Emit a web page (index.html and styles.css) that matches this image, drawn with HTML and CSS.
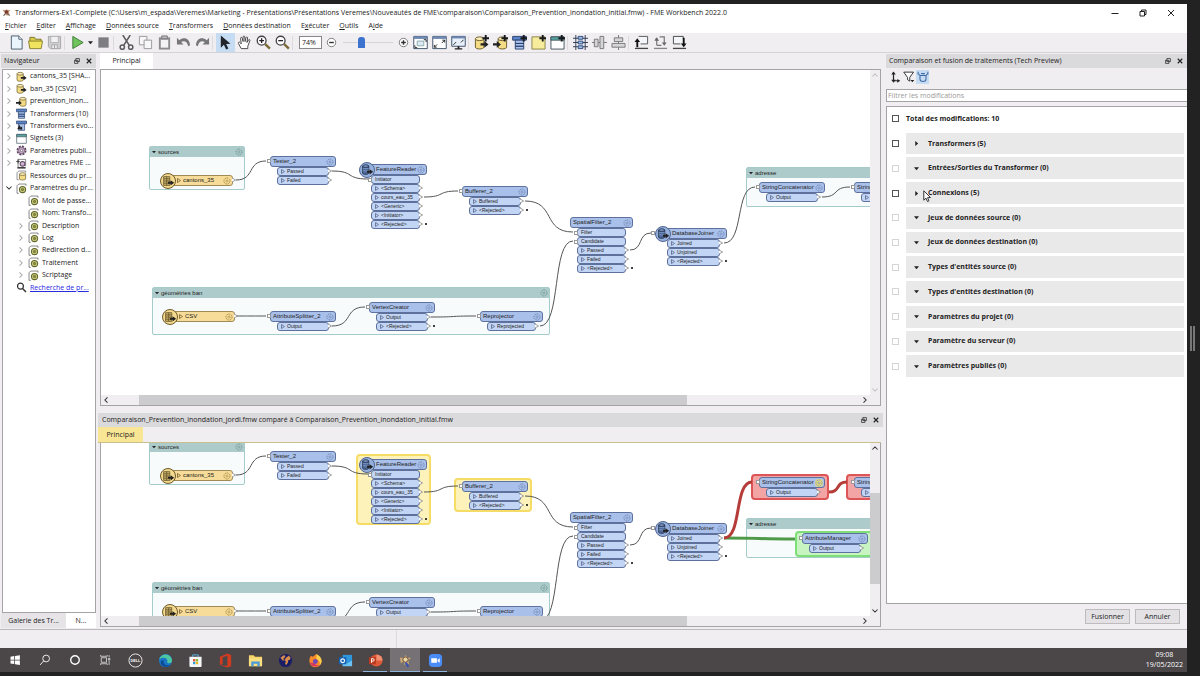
FILE: index.html
```html
<!DOCTYPE html>
<html lang="fr">
<head>
  <meta charset="UTF-8">
  <meta name="viewport" content="width=device-width, initial-scale=1">
  <title>FME Workbench 2022.0</title>
  <link rel="stylesheet" href="styles.css">
</head>
<body>
  <!-- Icon sprite -->
  <svg class="sprite" aria-hidden="true">
    <symbol id="i-fme" viewBox="0 0 16 16"><path d="M1 3l5 1 2-2 3 2 4-1-3 4 1 3 2 4-4-3-2 3-2-3-5 3 3-5z" fill="#b98a6a"/><circle cx="8" cy="7" r="3" fill="#7a3b34"/><path d="M3 14l3-4M13 14l-3-4" stroke="#444" stroke-width="1.5"/></symbol>
    <symbol id="i-new" viewBox="0 0 16 16"><path d="M2.500 1h8l3.500 3.500V15h-11.500z" fill="#eaf4fc" stroke="#4a5c6c"/><path d="M10.500 1v3.500H14" fill="#fff" stroke="#4a5c6c"/></symbol>
    <symbol id="i-open" viewBox="0 0 16 16"><path d="M2 14V2.500h5l1 2h6V7" fill="#d9cb4a" stroke="#7d7428"/><path d="M.5 6.500h15L14 14.500H2z" fill="#f0e35e" stroke="#8b8130"/></symbol>
    <symbol id="i-save" viewBox="0 0 16 16"><path d="M1.500 1.500h13v13h-11l-2-2z" fill="#cfcfd2" stroke="#a4a4a8"/><path d="M4 1.500h8V8H4z" fill="#f1f1f3" stroke="#b3b3b6"/><path d="M5 10.500h6v4H5z" fill="#eee" stroke="#a4a4a8"/><path d="M8 11v3" stroke="#999"/></symbol>
    <symbol id="i-play" viewBox="0 0 16 16"><path d="M3 1.500l11 6.500-11 6.500z" fill="#6fc45e" stroke="#3f7a38"/></symbol>
    <symbol id="i-caret" viewBox="0 0 6 6"><path d="M0 1.500h6L3 5z" fill="#222"/></symbol>
    <symbol id="i-caret-r" viewBox="0 0 6 6"><path d="M1.500 0v6L5 3z" fill="#222"/></symbol>
    <symbol id="i-stop" viewBox="0 0 16 16"><path d="M2.500 2.500h11v11h-11z" fill="#7d7d82"/></symbol>
    <symbol id="i-cut" viewBox="0 0 16 16"><g fill="none" stroke="#5a5a5e" stroke-width="1.600"><path d="M4 0l7 11M12 0L5 11"/><circle cx="3.500" cy="13" r="2.300"/><circle cx="12.500" cy="13" r="2.300"/></g></symbol>
    <symbol id="i-copy" viewBox="0 0 16 16"><g fill="#f7f7f9" stroke="#98989c"><path d="M1.500 1.500h8v9h-8z"/><path d="M6.500 5.500h8v9h-8z"/></g></symbol>
    <symbol id="i-paste" viewBox="0 0 16 16"><path d="M2 2.500h12v13H2z" fill="#8c8c90"/><path d="M4 5h8v8.500H4z" fill="#f3f3f5"/><path d="M5 1h6v3H5z" fill="#b9b9bd" stroke="#77777b"/></symbol>
    <symbol id="i-undo" viewBox="0 0 16 16"><path d="M1 3v7h7L5.500 7.500C9 5.500 12 7 13 12l2-1C14.500 4 9 1.500 3.500 5.500z" fill="#77777b"/></symbol>
    <symbol id="i-redo" viewBox="0 0 16 16"><path d="M15 3v7H8l2.500-2.500C7 5.500 4 7 3 12l-2-1C1.500 4 7 1.500 12.500 5.500z" fill="#77777b"/></symbol>
    <symbol id="i-pointer" viewBox="0 0 16 16"><path d="M3 .5v13l3.300-3 2.400 5 2.400-1.200L8.700 9.500l4.600-.3z" fill="#22242c"/></symbol>
    <symbol id="i-hand" viewBox="0 0 16 16"><path d="M4.500 14.500L1.500 9c-.5-1.500 1-2 2-.7l1 1.200-.7-6c0-1.300 1.500-1.300 1.800 0l.9 3.500V2c.2-1.200 1.700-1.200 1.800 0l.3 5 1-4.300c.5-1 1.700-.7 1.700.4L10.600 8l1.700-2.800c.8-.9 1.900-.2 1.400.9L11.500 12v2.500z" fill="#fff" stroke="#444"/></symbol>
    <symbol id="i-zoomin" viewBox="0 0 16 16"><circle cx="6" cy="6" r="4.700" fill="#fff" stroke="#444" stroke-width="1.400"/><path d="M3.500 6h5M6 3.500v5" stroke="#222" stroke-width="1.400"/><path d="M9.800 9.800l5 4.700" stroke="#7b6a35" stroke-width="2.600"/></symbol>
    <symbol id="i-zoomout" viewBox="0 0 16 16"><circle cx="6" cy="6" r="4.700" fill="#fff" stroke="#444" stroke-width="1.400"/><path d="M3.500 6h5" stroke="#222" stroke-width="1.400"/><path d="M9.800 9.800l5 4.700" stroke="#7b6a35" stroke-width="2.600"/></symbol>
    <symbol id="i-minus" viewBox="0 0 16 16"><circle cx="8" cy="8" r="4.500" fill="#fff" stroke="#777"/><path d="M5.500 8h5" stroke="#333" stroke-width="1.500"/></symbol>
    <symbol id="i-plus" viewBox="0 0 16 16"><circle cx="8" cy="8" r="4.500" fill="#fff" stroke="#777"/><path d="M5.500 8h5M8 5.500v5" stroke="#333" stroke-width="1.500"/></symbol>
    <symbol id="i-fit" viewBox="0 0 16 16"><path d="M.8 1.500h14.400v13H.8z" fill="#fff" stroke="#3d4f69"/><path d="M.8 1.500h14.400v2.700H.8z" fill="#6f8bb3"/><path d="M4.500 6.500h7v5h-7z" fill="#dce9f7" stroke="#8aa"/><path d="M2 13.500V11M2 13.500h2.500M14 5v2.500M14 5h-2.500" stroke="#222" fill="none"/></symbol>
    <symbol id="i-full" viewBox="0 0 16 16"><path d="M.8 1.500h14.400v13H.8z" fill="#fff" stroke="#3d4f69"/><path d="M.8 1.500h14.400v2.700H.8z" fill="#6f8bb3"/><path d="M2.500 13l3-3M2.500 13v-2.500M2.500 13H5M13.500 5.500l-3 3M13.500 5.500V8M13.500 5.500H11" stroke="#222" fill="none"/></symbol>
    <symbol id="i-screen" viewBox="0 0 16 16"><path d="M.8 1.500h14.400v10.500H.8z" fill="#e8f1fb" stroke="#3d4f69"/><path d="M.8 1.500h14.400v2.200H.8z" fill="#6f8bb3"/><path d="M2.500 10.500l3-3M13.500 5l-3 3" stroke="#222"/><path d="M7 12h2v2h3v1.500H4V14h3z" fill="#222"/></symbol>
    <symbol id="i-reader" viewBox="0 0 16 16"><path d="M1.500 4v9c0 2.500 9 2.500 9 0V4" fill="#f3dc84" stroke="#6b5a2a"/><ellipse cx="6" cy="4" rx="4.500" ry="2" fill="#faedb4" stroke="#6b5a2a"/><path d="M7 8.800h4V6.500L15.500 10 11 13.500v-2.300H7z" fill="#222"/></symbol>
    <symbol id="i-writer" viewBox="0 0 16 16"><path d="M5.500 4v9c0 2.500 9 2.500 9 0V4" fill="#f3dc84" stroke="#6b5a2a"/><ellipse cx="10" cy="4" rx="4.500" ry="2" fill="#faedb4" stroke="#6b5a2a"/><path d="M0 8.800h4V6.500L8.500 10 4 13.500v-2.300H0z" fill="#222"/></symbol>
    <symbol id="i-add" viewBox="0 0 16 16"><path d="M12.500 0v7M9 3.500h7" stroke="#16181c" stroke-width="2"/></symbol>
    <symbol id="i-transformer" viewBox="0 0 16 16"><path d="M.7 1.500h14.600v4H.7z" fill="#5b84c6" stroke="#2b4270"/><path d="M3.500 5.500h9V9h-9zM3.500 9h9v3h-9zM3.500 12h9v3h-9z" fill="#a9c3ec" stroke="#2b4270"/></symbol>
    <symbol id="i-note" viewBox="0 0 16 16"><path d="M1 2h14v13H1z" fill="#f6ec9c" stroke="#8a8247"/></symbol>
    <symbol id="i-bookmark" viewBox="0 0 16 16"><path d="M1 2h14v13H1z" fill="#fff" stroke="#44565e"/><path d="M1 2h14v3.500H1z" fill="#57a5a3" stroke="#44565e"/></symbol>
    <symbol id="i-grid" viewBox="0 0 16 16"><path d="M0 3.500h16M0 8h16M0 12.500h16M3 0v16M13 0v16" stroke="#2f3a50"/><path d="M5.500 1.500h5v3h-5zM5.500 6.500h5v3h-5zM5.500 11.500h5v3h-5z" fill="#9bbbe6" stroke="#2f4b7c"/></symbol>
    <symbol id="i-alignh" viewBox="0 0 16 16"><path d="M0 8h16" stroke="#777"/><path d="M2.500 4.500h4v8h-4zM8.500 1.500h4v13h-4z" fill="#d5d5d8" stroke="#77777b"/></symbol>
    <symbol id="i-alignv" viewBox="0 0 16 16"><path d="M8 0v16" stroke="#777"/><path d="M3.500 3h9v4h-9zM1 9h14v4H1z" fill="#d5d5d8" stroke="#77777b"/></symbol>
    <symbol id="i-up" viewBox="0 0 16 16"><path d="M5 1.500h9.500v8H7" fill="#f2f6fb" stroke="#555"/><path d="M1 14.300h14" stroke="#444" stroke-width="1.400"/><path d="M3.500 13V6" stroke="#111" stroke-width="2"/><path d="M.5 7.500l3-4 3 4z" fill="#111"/></symbol>
    <symbol id="i-swap" viewBox="0 0 16 16"><path d="M4 11V4.500h-1.500M7 2h5v7M4 11h5" fill="none" stroke="#777" stroke-width="1.300"/><path d="M1 14.300h14" stroke="#888" stroke-width="1.400"/><path d="M1.500 6L4 2.500 6.500 6zM9.500 8h5L12 11.500z" fill="#666"/></symbol>
    <symbol id="i-down" viewBox="0 0 16 16"><path d="M9 9.500H1.500v-8H12v3" fill="#f2f6fb" stroke="#444"/><path d="M1 14.300h14" stroke="#444" stroke-width="1.400"/><path d="M12.500 3v7" stroke="#111" stroke-width="2"/><path d="M9.500 9h6l-3 4z" fill="#111"/></symbol>
    <symbol id="i-custom" viewBox="0 0 16 16"><path d="M.7 1.500h14.600v4H.7z" fill="#5b84c6" stroke="#2b4270"/><path d="M3.500 5.500h9V15h-9z" fill="#a9c3ec" stroke="#2b4270"/><path d="M2 13l3-6 2 4 2-2v5z" fill="#222"/></symbol>
    <symbol id="i-param" viewBox="0 0 16 16"><circle cx="8" cy="8" r="6" fill="#e6d4e6" stroke="#5d4560" stroke-width="2.500" stroke-dasharray="3 1.700"/><circle cx="8" cy="8" r="4.500" fill="#cdb3cf" stroke="#5d4560"/><circle cx="8" cy="8" r="1.700" fill="#fff" stroke="#5d4560"/></symbol>
    <symbol id="i-fmeparam" viewBox="0 0 16 16"><path d="M3 14V2h11v10" stroke="#555" fill="#fff"/><path d="M.5 5h5M3 8V2" stroke="#333" stroke-width="1.300"/><circle cx="9.500" cy="8.500" r="3.500" fill="#cdb3cf" stroke="#5d4560" stroke-width="1.500"/><path d="M2 14.300h12" stroke="#222" stroke-width="2"/></symbol>
    <symbol id="i-res" viewBox="0 0 16 16"><path d="M4 14H1.500V4L4 1.500h10V4" fill="#fff" stroke="#666"/><path d="M5 6v7c0 2 9 2 9 0V6" fill="#f3dc84" stroke="#6b5a2a"/><ellipse cx="9.500" cy="6" rx="4.500" ry="2" fill="#faedb4" stroke="#6b5a2a"/></symbol>
    <symbol id="i-prop" viewBox="0 0 16 16"><path d="M4 15H1.500V4L4 1.500h10.500V4" fill="#fff" stroke="#555"/><circle cx="9.500" cy="9.500" r="4.500" fill="#c9cd7e" stroke="#63662c" stroke-width="1.500"/><circle cx="9.500" cy="9.500" r="1.700" fill="#8c9040" stroke="#63662c"/></symbol>
    <symbol id="i-find" viewBox="0 0 16 16"><circle cx="6.500" cy="6" r="4.300" fill="none" stroke="#333" stroke-width="1.800"/><path d="M9.500 9.500l5 5" stroke="#333" stroke-width="2.200"/></symbol>
    <symbol id="i-chev" viewBox="0 0 8 8"><path d="M2 .5L5.500 4 2 7.500" fill="none" stroke="currentColor" stroke-width="1.400"/></symbol>
    <symbol id="i-float" viewBox="0 0 8 8"><path d="M2.500.8h4.700v4H2.500zM.8 3h4.400v4.200H.8z" fill="#e6e6e6" stroke="#222"/></symbol>
    <symbol id="i-close" viewBox="0 0 8 8"><path d="M1 1l6 6M7 1L1 7" stroke="#222" stroke-width="1.500"/></symbol>
    <symbol id="i-sort" viewBox="0 0 16 16"><path d="M6 2v11h6" fill="none" stroke="#222" stroke-width="1.600"/><path d="M3 4.500L6 .5l3 4zM3 11.500l3 4 3-4zM11 10.500l4 2.500-4 2.500z" fill="#222"/></symbol>
    <symbol id="i-filter" viewBox="0 0 16 16"><path d="M1 1.500h13L9 8.500v5l-3-2v-3z" fill="#fff" stroke="#333" stroke-width="1.300"/><path d="M10 12h5l-2.500 3z" fill="#222"/></symbol>
    <symbol id="i-link" viewBox="0 0 16 16"><path d="M4 6h8v5c0 4-8 4-8 0zM4 6L1.500 3.500M12 6l2.500-2.500M1.500 1v3.500M14.500 1v3.500M5.500 3.500h5" fill="none" stroke="#3d6ba5" stroke-width="1.400"/></symbol>
    <symbol id="i-gear" viewBox="0 0 10 10"><circle cx="5" cy="5" r="3.800" fill="none" stroke="currentColor" stroke-width="1.200" stroke-dasharray="2 .8"/><circle cx="5" cy="5" r="1.400" fill="none" stroke="currentColor" stroke-width=".8"/></symbol>
    <symbol id="i-table" viewBox="0 0 16 16"><path d="M3 3h7v10H3zM3 5.500h7M3 8h7M3 10.500h7M6.500 3v10" fill="#c9b068" stroke="#5a4a22" stroke-width=".8"/><path d="M8 8.800h3V7l4 3-4 3v-1.800H8z" fill="#222"/></symbol>
    <symbol id="i-db" viewBox="0 0 16 16"><path d="M3 3.500v8c0 2 7 2 7 0v-8" fill="#4c6796" stroke="#23324e"/><ellipse cx="6.500" cy="3.500" rx="3.500" ry="1.500" fill="#7f9aca" stroke="#23324e"/><path d="M3 6.500h7M3 9h7" stroke="#8fa9d6" stroke-width=".8"/><path d="M8 8.800h3V7l4 3-4 3v-1.800H8z" fill="#222"/></symbol>
  </svg>

  <div class="app">
    <header class="titlebar">
      <svg class="logo"><use href="#i-fme"/></svg>
      <h1>Transformers-Ex1-Complete (C:\Users\m_espada\Veremes\Marketing - Présentations\Présentations Veremes\Nouveautés de FME\comparaison\Comparaison_Prevention_inondation_initial.fmw) - FME Workbench 2022.0</h1>
      <div class="window-buttons">
        <button aria-label="Réduire"><svg viewBox="0 0 8 8"><path d="M.5 4.500h7"/></svg></button>
        <button aria-label="Restaurer"><svg viewBox="0 0 8 8"><path d="M2.500 2.500v-1.500h4.500v4.500H5.500M1 2.500h4.500V7H1z"/></svg></button>
        <button aria-label="Fermer"><svg viewBox="0 0 8 8"><path d="M1 1l6 6M7 1L1 7"/></svg></button>
      </div>
    </header>

    <nav class="menubar">
      <a href="#"><u>F</u>ichier</a>
      <a href="#"><u>E</u>diter</a>
      <a href="#"><u>A</u>ffichage</a>
      <a href="#"><u>D</u>onnées source</a>
      <a href="#"><u>T</u>ransformers</a>
      <a href="#"><u>D</u>onnées destination</a>
      <a href="#">E<u>x</u>écuter</a>
      <a href="#"><u>O</u>utils</a>
      <a href="#">A<u>i</u>de</a>
    </nav>

    <div class="toolbar">
      <button aria-label="Nouveau"><svg><use href="#i-new"/></svg></button>
      <button aria-label="Ouvrir"><svg><use href="#i-open"/></svg></button>
      <button aria-label="Enregistrer"><svg><use href="#i-save"/></svg></button>
      <span class="sep"></span>
      <button aria-label="Exécuter"><svg><use href="#i-play"/></svg></button>
      <button class="drop" aria-label="Options"><svg><use href="#i-caret"/></svg></button>
      <button aria-label="Arrêter"><svg><use href="#i-stop"/></svg></button>
      <span class="sep"></span>
      <button aria-label="Couper"><svg><use href="#i-cut"/></svg></button>
      <button aria-label="Copier"><svg><use href="#i-copy"/></svg></button>
      <button aria-label="Coller"><svg><use href="#i-paste"/></svg></button>
      <button aria-label="Annuler l'action"><svg><use href="#i-undo"/></svg></button>
      <button aria-label="Rétablir"><svg><use href="#i-redo"/></svg></button>
      <span class="sep"></span>
      <button class="on" aria-label="Sélection"><svg><use href="#i-pointer"/></svg></button>
      <button aria-label="Déplacer"><svg><use href="#i-hand"/></svg></button>
      <button aria-label="Zoom avant"><svg><use href="#i-zoomin"/></svg></button>
      <button aria-label="Zoom arrière"><svg><use href="#i-zoomout"/></svg></button>
      <span class="sep"></span>
      <input class="zoom-value" type="text" value="74%" aria-label="Zoom">
      <button aria-label="Moins"><svg><use href="#i-minus"/></svg></button>
      <input class="zoom-range" type="range" min="0" max="100" value="36" aria-label="Niveau de zoom">
      <button class="narrow" aria-label="Plus"><svg><use href="#i-plus"/></svg></button>
      <button aria-label="Ajuster"><svg><use href="#i-fit"/></svg></button>
      <button aria-label="Tout voir"><svg><use href="#i-full"/></svg></button>
      <button aria-label="Plein écran"><svg><use href="#i-screen"/></svg></button>
      <span class="sep"></span>
      <button aria-label="Ajouter un lecteur"><svg><use href="#i-reader"/><use href="#i-add"/></svg></button>
      <button aria-label="Ajouter un écrivain"><svg><use href="#i-writer"/><use href="#i-add"/></svg></button>
      <button aria-label="Ajouter un transformer"><svg><use href="#i-transformer"/><use href="#i-add"/></svg></button>
      <button aria-label="Ajouter une annotation"><svg><use href="#i-note"/><use href="#i-add"/></svg></button>
      <button aria-label="Ajouter un signet"><svg><use href="#i-bookmark"/><use href="#i-add"/></svg></button>
      <span class="sep"></span>
      <button aria-label="Grille"><svg><use href="#i-grid"/></svg></button>
      <button aria-label="Aligner horizontalement"><svg><use href="#i-alignh"/></svg></button>
      <button aria-label="Aligner verticalement"><svg><use href="#i-alignv"/></svg></button>
      <span class="sep"></span>
      <button aria-label="Monter"><svg><use href="#i-up"/></svg></button>
      <button aria-label="Échanger"><svg><use href="#i-swap"/></svg></button>
      <button aria-label="Descendre"><svg><use href="#i-down"/></svg></button>
    </div>

    <main class="workspace">
      <aside class="navigator">
        <div class="dock-title">
          <h2>Navigateur</h2>
          <button aria-label="Détacher"><svg><use href="#i-float"/></svg></button>
          <button aria-label="Fermer"><svg><use href="#i-close"/></svg></button>
        </div>
        <div class="tree-box">
          <ul class="tree">
            <li><svg class="chev"><use href="#i-chev"/></svg><svg class="ico"><use href="#i-reader"/></svg>cantons_35 [SHA...</li>
            <li><svg class="chev"><use href="#i-chev"/></svg><svg class="ico"><use href="#i-reader"/></svg>ban_35 [CSV2]</li>
            <li><svg class="chev"><use href="#i-chev"/></svg><svg class="ico"><use href="#i-writer"/></svg>prevention_inon...</li>
            <li><svg class="chev"><use href="#i-chev"/></svg><svg class="ico"><use href="#i-transformer"/></svg>Transformers (10)</li>
            <li><svg class="chev"><use href="#i-chev"/></svg><svg class="ico"><use href="#i-custom"/></svg>Transformers évo...</li>
            <li><svg class="chev"><use href="#i-chev"/></svg><svg class="ico"><use href="#i-bookmark"/></svg>Signets (3)</li>
            <li><svg class="chev"><use href="#i-chev"/></svg><svg class="ico"><use href="#i-param"/></svg>Paramètres publi...</li>
            <li><svg class="chev"><use href="#i-chev"/></svg><svg class="ico"><use href="#i-fmeparam"/></svg>Paramètres FME ...</li>
            <li><span class="chev"></span><svg class="ico"><use href="#i-res"/></svg>Ressources du pr...</li>
            <li><svg class="chev open"><use href="#i-chev"/></svg><svg class="ico"><use href="#i-prop"/></svg>Paramètres du pr...</li>
            <li class="sub"><span class="chev"></span><svg class="ico"><use href="#i-prop"/></svg>Mot de passe...</li>
            <li class="sub"><span class="chev"></span><svg class="ico"><use href="#i-prop"/></svg>Nom: Transfo...</li>
            <li class="sub"><svg class="chev"><use href="#i-chev"/></svg><svg class="ico"><use href="#i-prop"/></svg>Description</li>
            <li class="sub"><svg class="chev"><use href="#i-chev"/></svg><svg class="ico"><use href="#i-prop"/></svg>Log</li>
            <li class="sub"><svg class="chev"><use href="#i-chev"/></svg><svg class="ico"><use href="#i-prop"/></svg>Redirection d...</li>
            <li class="sub"><svg class="chev"><use href="#i-chev"/></svg><svg class="ico"><use href="#i-prop"/></svg>Traitement</li>
            <li class="sub"><svg class="chev"><use href="#i-chev"/></svg><svg class="ico"><use href="#i-prop"/></svg>Scriptage</li>
            <li><span class="chev"></span><svg class="ico"><use href="#i-find"/></svg><a href="#">Recherche de pr...</a></li>
          </ul>
        </div>
        <div class="nav-tabs">
          <button>Galerie des Tr...</button>
          <button class="current">N...</button>
        </div>
      </aside>

      <section class="editor">
        <div class="tabs"><button>Principal</button></div>
        <div class="frame frame-main">
          <div class="canvas" id="main-canvas"></div>
          <div class="vscroll disabled">
            <svg class="up"><use href="#i-chev"/></svg>
            <svg class="down"><use href="#i-chev"/></svg>
          </div>
          <div class="hscroll">
            <svg class="left"><use href="#i-chev"/></svg>
            <div class="track"><div class="thumb"></div></div>
            <svg><use href="#i-chev"/></svg>
          </div>
        </div>

        <div class="dock-title compare-title">
          <h2>Comparaison_Prevention_inondation_jordi.fmw comparé à Comparaison_Prevention_inondation_initial.fmw</h2>
          <button aria-label="Détacher"><svg><use href="#i-float"/></svg></button>
          <button aria-label="Fermer"><svg><use href="#i-close"/></svg></button>
        </div>
        <div class="tabs compare-tabs"><button>Principal</button></div>
        <div class="frame frame-compare">
          <div class="canvas" id="compare-canvas"></div>
          <div class="vscroll">
            <svg class="up"><use href="#i-chev"/></svg>
            <div class="track"><div class="thumb"></div></div>
            <svg class="down"><use href="#i-chev"/></svg>
          </div>
          <div class="hscroll">
            <svg class="left"><use href="#i-chev"/></svg>
            <div class="track"><div class="thumb"></div></div>
            <svg><use href="#i-chev"/></svg>
          </div>
        </div>
      </section>

      <aside class="merge">
        <div class="dock-title">
          <h2>Comparaison et fusion de traitements (Tech Preview)</h2>
          <button aria-label="Détacher"><svg><use href="#i-float"/></svg></button>
          <button aria-label="Fermer"><svg><use href="#i-close"/></svg></button>
        </div>
        <div class="merge-tools">
          <button aria-label="Trier"><svg><use href="#i-sort"/></svg></button>
          <button aria-label="Filtrer"><svg><use href="#i-filter"/></svg></button>
          <button class="on" aria-label="Synchroniser"><svg><use href="#i-link"/></svg></button>
        </div>
        <input class="merge-filter" type="text" placeholder="Filtrer les modifications" aria-label="Filtrer les modifications">
        <div class="changes-box">
          <ul class="changes">
            <li><input type="checkbox" id="c0"><label for="c0">Total des modifications: 10</label></li>
            <li><input type="checkbox" id="c1"><div class="bar"><svg><use href="#i-caret-r"/></svg><label for="c1">Transformers (5)</label></div></li>
            <li><input type="checkbox" id="c2" disabled><div class="bar"><svg><use href="#i-caret"/></svg><label for="c2">Entrées/Sorties du Transformer (0)</label></div></li>
            <li><input type="checkbox" id="c3"><div class="bar"><svg><use href="#i-caret-r"/></svg><label for="c3">Connexions (5)</label>
              <svg class="mouse" viewBox="0 0 8 12"><path d="M.8.8v9.400l2.200-2 1.500 3.300 1.500-.7-1.500-3.100 3-.2z"/></svg></div></li>
            <li><input type="checkbox" id="c4" disabled><div class="bar"><svg><use href="#i-caret"/></svg><label for="c4">Jeux de données source (0)</label></div></li>
            <li><input type="checkbox" id="c5" disabled><div class="bar"><svg><use href="#i-caret"/></svg><label for="c5">Jeux de données destination (0)</label></div></li>
            <li><input type="checkbox" id="c6" disabled><div class="bar"><svg><use href="#i-caret"/></svg><label for="c6">Types d'entités source (0)</label></div></li>
            <li><input type="checkbox" id="c7" disabled><div class="bar"><svg><use href="#i-caret"/></svg><label for="c7">Types d'entités destination (0)</label></div></li>
            <li><input type="checkbox" id="c8" disabled><div class="bar"><svg><use href="#i-caret"/></svg><label for="c8">Paramètres du projet (0)</label></div></li>
            <li><input type="checkbox" id="c9" disabled><div class="bar"><svg><use href="#i-caret"/></svg><label for="c9">Paramètre du serveur (0)</label></div></li>
            <li><input type="checkbox" id="c10" disabled><div class="bar"><svg><use href="#i-caret"/></svg><label for="c10">Paramètres publiés (0)</label></div></li>
          </ul>
        </div>
        <div class="merge-actions">
          <button>Fusionner</button>
          <button>Annuler</button>
        </div>
      </aside>
    </main>

    <div class="statusbar"><span></span></div>

    <footer class="taskbar">
      <button aria-label="Démarrer"><svg viewBox="0 0 16 16"><path d="M2 3.500l5-.8v4.800H2zM8 2.500l6.500-1v6H8zM2 8.500h5v4.800l-5-.8zM8 8.500h6.500v6L8 13.500z" fill="#fff"/></svg></button>
      <button aria-label="Rechercher"><svg viewBox="0 0 16 16"><circle cx="9.500" cy="6" r="4.500" fill="none" stroke="#eee" stroke-width="1.300"/><path d="M6.500 9L1.500 14.500" stroke="#eee" stroke-width="1.300"/></svg></button>
      <button aria-label="Cortana"><svg viewBox="0 0 16 16"><circle cx="8" cy="8" r="5.700" fill="none" stroke="#fff" stroke-width="1.800"/></svg></button>
      <button aria-label="Vue des tâches"><svg viewBox="0 0 16 16"><path d="M3 5h7v6H3zM2 1.500V3h9V1.500M2 14.500V13h9v1.500M13.500 1.500v3M13.500 9v5.500M12.500 6h2v2h-2z" fill="none" stroke="#ddd" stroke-width="1.100"/></svg></button>
      <button aria-label="Dell"><svg class="big" viewBox="0 0 16 16"><circle cx="8" cy="8" r="7" fill="none" stroke="#eee" stroke-width="1"/><text x="8" y="9.700" text-anchor="middle" class="dell">DELL</text></svg></button>
      <button aria-label="Edge"><svg class="big" viewBox="0 0 16 16"><circle cx="8" cy="8" r="7" fill="#1b74c5"/><path d="M1.200 7A7 7 0 0 1 15 8c0 2-1.500 3-4 2.800C9 10.500 10 9.500 10 8 9.500 4.500 4 4 1.200 7z" fill="#4dc7a1"/><path d="M6 8c-1 3 2 6 7 5-3 3-9 2-10-2-.5-3 1.500-4 3-3z" fill="#0d4c94"/></svg></button>
      <button aria-label="Microsoft Store"><svg class="big" viewBox="0 0 16 16"><path d="M5 4V2h6v2" fill="none" stroke="#58b9ea"/><path d="M1.500 4h13v9.500c0 1-.5 1.500-1.500 1.500H3c-1 0-1.500-.5-1.500-1.500z" fill="#f4f6f8"/><path d="M5.300 6.500h2.500V9H5.300z" fill="#e5502d"/><path d="M8.300 6.500h2.500V9H8.300z" fill="#7fb92c"/><path d="M5.300 9.500h2.500V12H5.300z" fill="#2b9fe0"/><path d="M8.300 9.500h2.500V12H8.300z" fill="#f3b41b"/></svg></button>
      <button aria-label="Office"><svg class="big" viewBox="0 0 16 16"><path d="M2 4l8-3.500L14 2v12l-4 1.500L2 13l8 .5V3L5 4.500v7L2 13z" fill="#d13b1e"/></svg></button>
      <button aria-label="Explorateur"><svg class="big" viewBox="0 0 16 16"><path d="M1 2.500h5L7.500 4H15v10H1z" fill="#f6d467"/><path d="M1 5.500h14V14H1z" fill="#f9df80"/><path d="M3.500 9h9v5H10v-2.500H6V14H3.500z" fill="#4b9ad8"/></svg></button>
      <button aria-label="Globe"><svg class="big" viewBox="0 0 16 16"><circle cx="8" cy="8" r="7" fill="#181d66"/><path d="M2.500 5l3.500-2.500 2 .5-1 2-1.500 1 1.500 2-2 0zM8.500 5l3-2 2 2-1 2.500-1.500 0-.5 3-2 2.500-1-2 1-2-1.500-1.500z" fill="#d98c4a"/></svg></button>
      <button aria-label="Firefox"><svg class="big" viewBox="0 0 16 16"><path d="M2 5l1-2 2 1c2-1 2-2 4-3 0 2 5 3 5.500 7.500A6.500 6.500 0 0 1 1.500 9C1.500 7 1.700 6 2 5z" fill="#fb8a2b"/><path d="M9 1c3 1.500 5.500 4 5.500 7.500 0 2-1 3.500-2 4.500 1-4-2-6-3.500-7z" fill="#fcd14a"/><path d="M2 10c1 4 6 6 10 3-2 .5-4 0-5-2z" fill="#d8365f"/><circle cx="7.800" cy="9" r="2.600" fill="#7048b8"/></svg></button>
      <button aria-label="Outlook"><svg class="big" viewBox="0 0 16 16"><path d="M5 2h10v11.500H5z" fill="#2f97de"/><path d="M5 8l5 3 5-3v6H5z" fill="#6cc2f3"/><path d="M1 4.500h8v7.500H1z" fill="#1563b4"/><circle cx="5" cy="8.200" r="2" fill="none" stroke="#fff" stroke-width="1.200"/></svg></button>
      <button class="running" aria-label="PowerPoint"><svg class="big" viewBox="0 0 16 16"><circle cx="9" cy="8" r="6.500" fill="#dd5a38"/><path d="M9 1.500A6.500 6.500 0 0 1 15.500 8H9z" fill="#f4906f"/><path d="M1 4.500h7.500V12H1z" fill="#b93a1d"/><path d="M3.800 10.500V6h1.400a1.300 1.300 0 0 1 0 2.700H3.800" fill="none" stroke="#fff"/></svg></button>
      <button class="running active" aria-label="FME Workbench"><svg class="big" viewBox="0 0 16 16"><path d="M2 5l4 0 2-3 2 3h4l-3 3 1 4-3-2-2 3-1-4-3 2z" fill="#c8a878"/><circle cx="8" cy="7" r="2.800" fill="#e7d7a0" stroke="#6b4a3a"/><path d="M8 10l3 5" stroke="#3b4fb8" stroke-width="2"/></svg></button>
      <button class="running" aria-label="Zoom"><svg class="big" viewBox="0 0 16 16"><rect x="1" y="1" width="14" height="14" rx="4" fill="#4a8cf6"/><path d="M3.500 5.500h6v5h-6zM10.200 7.300l2.300-1.600v4.600l-2.300-1.600z" fill="#fff"/></svg></button>
      <div class="clock"><span>09:08</span><span>19/05/2022</span></div>
    </footer>
  </div>
  <div class="grip"></div>

  <script src="script.js"></script>
</body>
</html>
```
FILE: styles.css
```css
* { box-sizing: border-box; }

body, h1, h2, ul, p { margin: 0; padding: 0; }

body {
  display: flex;
  height: 100vh;
  padding: 4px 0;
  overflow: hidden;
  background: #222222;
  color: #222222;
  font-family: "Open Sans", "Noto Sans", sans-serif;
  font-size: 7px;
  line-height: 10px;
}

h1, h2 { font-size: 7px; font-weight: normal; white-space: nowrap; }
ul { list-style: none; }
a { color: inherit; text-decoration: none; }

button, input {
  margin: 0;
  padding: 0;
  border: none;
  border-radius: 0;
  background: none;
  color: inherit;
  font: inherit;
}

svg { display: block; flex: none; }
.sprite { position: absolute; width: 0; height: 0; }

.app {
  flex: 1;
  min-width: 0;
  display: flex;
  flex-direction: column;
  background: #f0eef1;
}

.grip {
  align-self: center;
  width: 5px;
  height: 25px;
  margin: 0 5px 0 3px;
  border: solid #777777;
  border-width: 0 2px;
}

/* Title and menu */
.titlebar {
  display: flex;
  align-items: center;
  height: 17px;
  padding-left: 2px;
  background: #ffffff;
}
.logo { width: 9px; height: 9px; margin-right: 4px; }
.titlebar h1 { flex: 1; }
.window-buttons { display: flex; padding-right: 2px; }
.window-buttons button { width: 28px; height: 14px; display: grid; place-items: center; }
.window-buttons svg { width: 8px; height: 8px; fill: none; stroke: #222222; }

.menubar {
  display: flex;
  gap: 10px;
  height: 12px;
  padding-left: 5px;
  background: #ffffff;
}

/* Toolbar */
.toolbar {
  display: flex;
  align-items: center;
  height: 20px;
  padding-left: 7px;
  border-bottom: 1px solid #d5d3d6;
}
.toolbar button { width: 19px; height: 19px; display: grid; place-items: center; }
.toolbar button svg { width: 15px; height: 15px; }
.toolbar .drop { width: 7px; }
.toolbar .drop svg { width: 5px; height: 5px; }
.toolbar .narrow { width: 16px; }
.toolbar .on, .merge-tools .on { background: #c6dcf3; }
.sep { width: 4px; height: 14px; border-left: 1px solid #dcdadd; }
.toolbar .zoom-value {
  width: 23px;
  height: 13px;
  margin-left: 3px;
  padding-left: 2px;
  border: 1px solid #888888;
  background: #ffffff;
}
.zoom-range {
  appearance: none;
  width: 54px;
  height: 16px;
  background: linear-gradient(#d6d4d7, #d6d4d7) center / 50px 1px no-repeat;
}
.zoom-range::-webkit-slider-thumb {
  appearance: none;
  width: 7px;
  height: 11px;
  border-radius: 3px 3px 0 0;
  background: #3c73cf;
}

/* Docks */
.workspace {
  flex: 1;
  min-height: 0;
  display: grid;
  grid-template-columns: 98px minmax(0, 1fr) 302px;
  border-bottom: 1px solid #bbb9bc;
}

.dock-title {
  display: flex;
  align-items: center;
  gap: 6px;
  height: 14px;
  padding: 0 4px 0 3px;
  background: #dad9db;
}
.dock-title h2 { flex: 1; }
.dock-title button svg { width: 6px; height: 6px; }

.navigator {
  display: flex;
  flex-direction: column;
  padding: 1px 2px 1px 1px;
}
.tree-box {
  flex: 1;
  margin: 1px 0 0 1px;
  border: 1px solid #a5a3a6;
  background: #ffffff;
}
.tree {
  display: grid;
  grid-auto-rows: 1fr;
  height: 224px;
}
.tree li { display: flex; align-items: center; padding-left: 3px; white-space: nowrap; }
.tree .sub { padding-left: 15px; }
.tree a { color: #2a2ae0; text-decoration: underline; }
.tree .chev { width: 6px; height: 6px; margin-right: 4px; color: #aaaaaa; }
.tree .open { transform: rotate(90deg); color: #333333; }
.ico { width: 11px; height: 11px; margin-right: 3px; }
.nav-tabs { display: flex; height: 15px; }
.nav-tabs button { flex: 1; background: #e6e4e7; white-space: nowrap; }
.nav-tabs button:first-child { flex: none; width: 65px; }
.nav-tabs .current { background: #ffffff; }

/* Workspace editor */
.editor {
  display: flex;
  flex-direction: column;
  min-width: 0;
  padding: 0 4px 2px 0;
}
.tabs { display: flex; height: 16px; padding-left: 2px; }
.tabs button { width: 53px; background: #ffffff; }
.compare-title { margin-top: 7px; margin-right: -2px; }
.compare-title h2 { padding-left: 1px; }
.compare-tabs { padding-left: 0; border-bottom: 1px solid #c9c08e; }
.compare-tabs button { width: 45px; background: #f9e694; }

.frame {
  display: grid;
  grid-template-columns: minmax(0, 1fr) 10px;
  grid-template-rows: minmax(0, 1fr) 10px;
  margin-left: 2px;
  border: 1px solid #a5a3a6;
  min-height: 0;
}
.frame-main { flex: 338 1 0; }
.frame-compare { flex: 184 1 0; border-top: none; }

.vscroll { display: flex; flex-direction: column; justify-content: space-between; align-items: center; background: #f0eef1; }
.hscroll { display: flex; align-items: center; background: #f0eef1; }
.vscroll svg, .hscroll svg { width: 6px; height: 6px; margin: 2px; color: #333333; }
.vscroll.disabled svg { color: #c0bec1; }
.up { transform: rotate(-90deg); }
.down { transform: rotate(90deg); }
.left { transform: rotate(180deg); }
.track { flex: 1; display: flex; }
.hscroll .track { align-self: stretch; padding-left: 28px; }
.hscroll .thumb { width: 76%; background: #cccbcd; }
.vscroll .track { align-self: stretch; padding: 40px 0 22px; }
.vscroll .thumb { flex: 1; background: #cccbcd; }

/* Graph */
.canvas {
  position: relative;
  overflow: hidden;
  background: #ffffff;
  font-family: "Liberation Sans", Arial, sans-serif;
  font-size: 6px;
  line-height: 9px;
}
.canvas > * { position: absolute; }
.links { inset: 0; width: 100%; height: 100%; fill: none; stroke: #555555; }
.links .removed { stroke: #b53c38; stroke-width: 3px; }
.links .added { stroke: #4f9a48; stroke-width: 3px; }

.bookmark { border: 1px solid #a5cccb; border-radius: 2px; background: #f8fbfc; }
.bookmark-head {
  display: flex;
  align-items: center;
  gap: 2px;
  height: 10px;
  padding: 0 1px 0 2px;
  background: #aecbcb;
}
.bookmark-head svg { width: 4px; height: 4px; }
.bookmark-head .gear { width: 8px; height: 8px; margin-left: auto; color: #6f9695; }

.mark { border: 2px solid; border-radius: 4px; }
.mark-changed { border-color: #f5dc67; background: #fdf3ba; }
.mark-removed { border-color: #dc5557; background: #f2a5a4; }
.mark-added { border-color: #7ede78; background: #c8f4c2; }

.node-head {
  position: relative;
  display: flex;
  align-items: center;
  justify-content: space-between;
  height: 11px;
  padding: 0 1px 0 2px;
  border: 1px solid #5d719c;
  border-radius: 3px;
  background: #a9c0ea;
}
.gear { width: 8px; height: 8px; color: #6f86b5; }
.node-head .warn { border-radius: 50%; background: #f1e27c; }
.has-badge .node-head { padding-left: 9px; }
.reader .node-head { border-color: #a08a55; background: #f6dc98; padding-left: 9px; }
.reader .node-head .label { flex: 1; }
.reader .gear { color: #a88a44; }
.badge {
  position: absolute;
  left: -8px;
  top: -3px;
  width: 16px;
  height: 16px;
  border: 1px solid #50648f;
  border-radius: 50%;
  background: #96b0de;
}
.reader .badge { border-color: #6e5a2c; background: #f3d98d; }
.inlet {
  position: absolute;
  left: -4px;
  top: 2px;
  width: 4px;
  height: 4px;
  border: 1px solid #999999;
  background: #ffffff;
}
.has-badge .node-head .inlet { left: -12px; }
.arrow { width: 4px; height: 6px; fill: #ffffff; stroke: #888888; }
.node-head .arrow { position: absolute; left: 100%; top: 1px; }
.port > .arrow { position: absolute; left: 100%; top: 0; }
.expander { width: 4px; height: 5px; margin-right: 2px; fill: none; stroke: #6a7ba0; }
.reader .expander { stroke: #8c7640; }
.port {
  position: relative;
  display: flex;
  align-items: center;
  height: 9px;
  padding-left: 3px;
  border: 1px solid #5d719c;
  border-radius: 3px;
  background: #c3d5f5;
  font-size: 5px;
  line-height: 7px;
}
.dot { position: absolute; right: -8px; top: 2px; width: 2px; height: 2px; border-radius: 50%; background: #000000; }

/* Comparison panel */
.merge { display: flex; flex-direction: column; padding: 1px 0 0 1px; }
.merge-tools { display: flex; gap: 1px; height: 18px; padding: 2px 0 2px 2px; }
.merge-tools button { width: 13px; display: grid; place-items: center; }
.merge-tools svg { width: 12px; height: 12px; }
.merge-filter {
  height: 13px;
  margin-top: 3px;
  padding-left: 1px;
  border: 1px solid #a5a3a6;
  border-right: none;
  background: #ffffff;
}
.merge-filter::placeholder { color: #999999; }
.changes-box {
  flex: 1;
  margin-top: 4px;
  border: 1px solid #a5a3a6;
  border-right: none;
  background: #ffffff;
}
.changes {
  display: grid;
  grid-auto-rows: 1fr;
  gap: 3px;
  height: 269px;
  margin: 1px 3px 0 5px;
  font-weight: bold;
}
.changes li { display: flex; align-items: center; }
.changes input {
  appearance: none;
  width: 7px;
  height: 7px;
  margin-right: 7px;
  border: 1px solid #555555;
  background: #ffffff;
}
.changes input:disabled { border-color: #d5d5d5; }
.bar {
  position: relative;
  flex: 1;
  align-self: stretch;
  display: flex;
  align-items: center;
  gap: 8px;
  padding-left: 8px;
  background: #eae9ea;
}
.bar svg { width: 5px; height: 5px; margin-right: 1px; }
.bar .mouse { position: absolute; left: 17px; top: 8px; width: 8px; height: 12px; fill: #ffffff; stroke: #333333; }
.merge-actions { display: flex; justify-content: flex-end; gap: 5px; padding: 5px 7px 5px; }
.merge-actions button { width: 45px; height: 15px; border: 1px solid #bdbbbe; background: #e3e1e4; }

/* Bottom bars */
.statusbar { display: flex; height: 18px; padding-left: 33%; }
.statusbar span { margin-left: 4px; border-left: 1px solid #dcdadd; }

.taskbar { display: flex; height: 24px; background: #4b4648; color: #ffffff; }
.taskbar button { width: 30px; display: grid; place-items: center; }
.taskbar svg { width: 12px; height: 12px; }
.taskbar .big { width: 15px; height: 15px; }
.taskbar .running { background: linear-gradient(#8fb4dc, #8fb4dc) bottom / 24px 1px no-repeat; }
.taskbar .active { background-color: #767174; background-size: 30px 1px; }
.dell { fill: #ffffff; font: bold 4px "Liberation Sans", sans-serif; }
.clock { display: flex; flex-direction: column; margin-left: auto; padding: 2px 4px 0 0; text-align: center; }
```
FILE: script.js
```js
// x, y, width, height
var bookmarks = [
  { name: "sources", x: 48, y: 76, w: 96, h: 44 },
  { name: "géométries ban", x: 51, y: 217, w: 398, h: 48 }
];

var nodes = [
  { name: "cantons_35", x: 66, y: 105, w: 66, reader: true },
  { name: "CSV", x: 68, y: 241, w: 66, reader: true },
  { name: "Tester_2", x: 169, y: 86, w: 66, px: 7, pw: 52, out: ["Passed", "Failed"] },
  { name: "FeatureReader", x: 265, y: 94, w: 61, px: 5, pw: 49, badge: true,
    inp: ["Initiator"], out: ["<Schema>", "cours_eau_35", "<Generic>", "<Initiator>", "<Rejected>"] },
  { name: "Bufferer_2", x: 361, y: 116, w: 66, px: 7, pw: 52, out: ["Buffered", "<Rejected>"] },
  { name: "SpatialFilter_2", x: 469, y: 147, w: 63, px: 7, pw: 49,
    inp: ["Filter", "Candidate"], out: ["Passed", "Failed", "<Rejected>"] },
  { name: "DatabaseJoiner", x: 561, y: 158, w: 65, px: 5, pw: 53, badge: true, inlet: true,
    out: ["Joined", "Unjoined", "<Rejected>"] },
  { name: "AttributeSplitter_2", x: 169, y: 241, w: 66, px: 7, pw: 52, out: ["Output"] },
  { name: "VertexCreator", x: 268, y: 232, w: 66, px: 7, pw: 52, out: ["Output", "<Rejected>"] },
  { name: "Reprojector", x: 379, y: 241, w: 63, px: 7, pw: 49, out: ["Reprojected"] },
  { name: "StringConcatenator", x: 658, y: 112, w: 66, px: 7, pw: 52, out: ["Output"], last: true },
  { name: "StringConcatenator_2", x: 753, y: 112, w: 66, px: 7, pw: 52, out: ["Output"] }
];

// x1, y1, x2, y2, kind
var links = [
  [135, 110, 165, 91], [231, 101, 267, 109], [323, 127, 357, 121],
  [424, 131, 472, 162], [439, 256, 472, 171], [529, 180, 550, 163],
  [135, 246, 165, 246], [231, 256, 264, 237], [330, 247, 375, 246]
];

var mainOnly = {
  bookmarks: [{ name: "adresse", x: 645, y: 97, w: 200, h: 40 }],
  marks: [],
  nodes: [],
  links: [[623, 173, 654, 117], [721, 127, 749, 117]]
};

var compareOnly = {
  bookmarks: [{ name: "adresse", x: 645, y: 153, w: 200, h: 40 }],
  marks: [
    { kind: "changed", x: 255, y: 89, w: 75, h: 71 },
    { kind: "changed", x: 353, y: 113, w: 78, h: 34 },
    { kind: "removed", x: 650, y: 109, w: 78, h: 26 },
    { kind: "removed", x: 745, y: 109, w: 78, h: 26 },
    { kind: "added", x: 694, y: 166, w: 78, h: 26 }
  ],
  nodes: [{ name: "AttributeManager", x: 701, y: 168, w: 66, px: 7, pw: 52, out: ["Output"] }],
  links: [[623, 173, 694, 174, "added"], [623, 173, 651, 117, "removed"], [728, 127, 746, 117, "removed"]]
};

var ARROW = '<svg class="arrow" viewBox="0 0 5 6"><path d="M0 .5L4.500 3L0 5.500"/></svg>';
var EXPANDER = '<svg class="expander" viewBox="0 0 4 5"><path d="M.5 .5L3.500 2.500L.5 4.500z"/></svg>';
var GEAR = '<svg class="gear"><use href="#i-gear"/></svg>';

function escapeText(s) {
  return s.replace(/</g, "&lt;").replace(/>/g, "&gt;");
}

function place(canvas, cls, x, y, w, h, html) {
  var el = document.createElement("div");
  el.className = cls;
  el.style.left = x + "px";
  el.style.top = y + "px";
  el.style.width = w + "px";
  if (h) el.style.height = h + "px";
  el.innerHTML = html;
  canvas.appendChild(el);
}

function nodeHtml(n, compared) {
  var gear = compared && n.last ? GEAR.replace('"gear"', '"gear warn"') : GEAR;
  var html = '<div class="node-head">';
  if (!n.reader && (!n.inp || n.inlet)) html += '<i class="inlet"></i>';
  if (n.reader) html += '<svg class="badge" viewBox="0 0 16 16"><use href="#i-table"/></svg>' + EXPANDER;
  if (n.badge) html += '<svg class="badge" viewBox="0 0 16 16"><use href="#i-db"/></svg>';
  html += '<span class="label">' + n.name + '</span>' + gear + (n.reader ? ARROW : "") + '</div>';
  if (n.reader) return html;

  html += '<ul style="margin-left:' + n.px + 'px;width:' + n.pw + 'px">';
  (n.inp || []).forEach(function (p) {
    html += '<li class="port"><i class="inlet"></i>' + p + '</li>';
  });
  n.out.forEach(function (p) {
    html += '<li class="port">' + EXPANDER + escapeText(p) + ARROW +
            (p === "<Rejected>" ? '<i class="dot"></i>' : "") + '</li>';
  });
  return html + '</ul>';
}

function linkPath(l, dy) {
  var dx = l[2] - l[0];
  return '<path class="' + (l[4] || "") + '" d="M' + l[0] + ' ' + (l[1] + dy) +
         'C' + (l[0] + dx * 0.65) + ' ' + (l[1] + dy) + ' ' + (l[0] + dx * 0.35) + ' ' + (l[3] + dy) +
         ' ' + l[2] + ' ' + (l[3] + dy) + '"/>';
}

function draw(id, extra, dy) {
  var canvas = document.getElementById(id);
  bookmarks.concat(extra.bookmarks).forEach(function (b) {
    place(canvas, "bookmark", b.x, b.y + dy, b.w, b.h,
      '<div class="bookmark-head"><svg><use href="#i-caret"/></svg>' + b.name + GEAR + '</div>');
  });
  extra.marks.forEach(function (m) {
    place(canvas, "mark mark-" + m.kind, m.x, m.y + dy, m.w, m.h, "");
  });
  canvas.insertAdjacentHTML("beforeend", '<svg class="links">' +
    links.concat(extra.links).map(function (l) { return linkPath(l, dy); }).join("") + '</svg>');
  nodes.concat(extra.nodes).forEach(function (n) {
    var cls = "node" + (n.reader ? " reader" : "") + (n.badge ? " has-badge" : "");
    place(canvas, cls, n.x, n.y + dy, n.w, 0, nodeHtml(n, dy !== 0));
  });
}

draw("main-canvas", mainOnly, 0);
// the comparison view is scrolled down by 78px
draw("compare-canvas", compareOnly, -78);
```
